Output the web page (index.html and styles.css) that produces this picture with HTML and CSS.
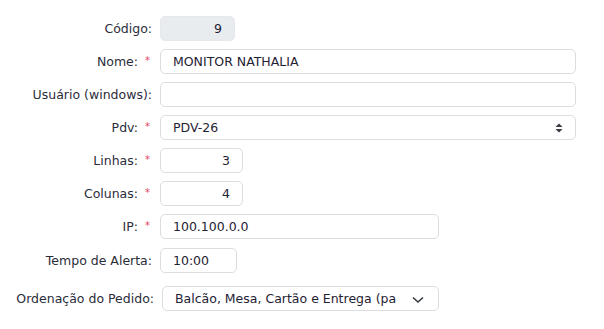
FILE: index.html
```html
<!DOCTYPE html>
<html lang="pt">
<head>
<meta charset="utf-8">
<link rel="stylesheet" href="styles.css">
</head>
<body>
<form class="form">
  <div class="row">
    <label class="lbl">Código:</label>
    <div class="field w-code disabled right">9</div>
  </div>
  <div class="row">
    <label class="lbl">Nome:<span class="req">*</span></label>
    <div class="field w-full">MONITOR NATHALIA</div>
  </div>
  <div class="row">
    <label class="lbl">Usuário (windows):</label>
    <div class="field w-full"></div>
  </div>
  <div class="row">
    <label class="lbl">Pdv:<span class="req">*</span></label>
    <div class="field w-full select">PDV-26
      <svg class="updown" width="8" height="10" viewBox="0 0 8 10"><path d="M4 0.5 L7.5 4 H0.5 Z M4 9.5 L7.5 6 H0.5 Z" fill="#343a40"/></svg>
    </div>
  </div>
  <div class="row">
    <label class="lbl">Linhas:<span class="req">*</span></label>
    <div class="field w-num right">3</div>
  </div>
  <div class="row">
    <label class="lbl">Colunas:<span class="req">*</span></label>
    <div class="field w-num right">4</div>
  </div>
  <div class="row">
    <label class="lbl">IP:<span class="req">*</span></label>
    <div class="field w-ip">100.100.0.0</div>
  </div>
  <div class="row row-tempo">
    <label class="lbl">Tempo de Alerta:</label>
    <div class="field w-time">10:00</div>
  </div>
  <div class="row row-ord">
    <label class="lbl lbl-ord">Ordenação do Pedido:</label>
    <div class="field w-ord select"><span class="clip">Balcão, Mesa, Cartão e Entrega (para viagem)</span>
      <svg class="chev" width="12" height="8" viewBox="0 0 12 8"><path d="M1 1.5 L6 6 L11 1.5" fill="none" stroke="#343a40" stroke-width="1.6"/></svg>
    </div>
  </div>
</form>
</body>
</html>
```

FILE: styles.css
```css
html, body {
  margin: 0;
  padding: 0;
  background: #ffffff;
}
body {
  font-family: "DejaVu Sans", "Noto Sans", sans-serif;
  font-size: 12.5px;
  color: #2b2d3a;
}
.form {
  display: flex;
  flex-direction: column;
  gap: 8px;
  padding-top: 16px;
}
.row {
  display: flex;
  align-items: center;
  height: 25px;
}
.row-tempo { margin-top: 1px; }
.row-ord { margin-top: 5px; }
.lbl {
  width: 152px;
  text-align: right;
  margin-right: 8px;
  white-space: nowrap;
}
.lbl-ord { width: 154px; }
.req {
  color: #e0435f;
  margin-left: 7px;
  margin-right: 2px;
  font-size: 10px;
  position: relative;
  top: -2px;
}
.field {
  box-sizing: border-box;
  height: 25px;
  border: 1px solid #dcdde3;
  border-radius: 5px;
  padding: 0 12px;
  display: flex;
  align-items: center;
  color: #1f2233;
  background: #fff;
  white-space: nowrap;
  position: relative;
}
.right { justify-content: flex-end; }
.disabled { background: #e9ecef; border-color: #e6e8ec; }
.w-code { width: 75px; }
.w-full { width: 416px; }
.w-num { width: 83px; }
.w-ip { width: 279px; }
.w-time { width: 77px; }
.w-ord { width: 277px; }
.select { padding-right: 32px; }
.w-ord.select { padding-right: 42px; }
.clip { overflow: hidden; display: block; width: 100%; }
.updown { position: absolute; right: 12px; top: 7px; }
.chev { position: absolute; right: 14px; top: 9px; }
```
